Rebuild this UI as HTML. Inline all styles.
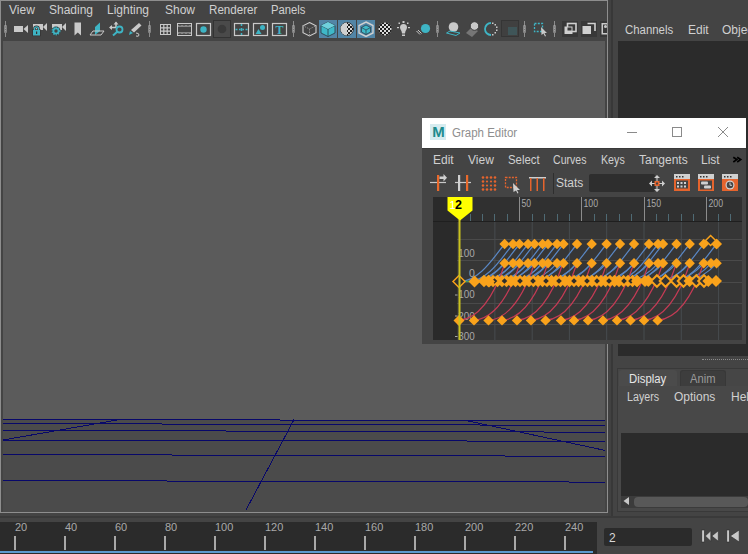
<!DOCTYPE html>
<html><head><meta charset="utf-8">
<style>
*{margin:0;padding:0;box-sizing:border-box}
html,body{width:748px;height:554px;overflow:hidden;background:#444444;font-family:"Liberation Sans",sans-serif;}
.a{position:absolute}
.t{position:absolute;color:#d0d0d0;font-size:12px;line-height:14px;white-space:nowrap}
</style></head><body>
<!-- left panel -->
<div class="a" style="left:0;top:0;width:608px;height:513px;border:1px solid #8e8e8e;background:#444"></div>
<div class="t" style="left:9px;top:3px">View</div>
<div class="t" style="left:49px;top:3px">Shading</div>
<div class="t" style="left:107px;top:3px">Lighting</div>
<div class="t" style="left:165px;top:3px">Show</div>
<div class="t" style="left:209px;top:3px;transform:scaleX(0.967);transform-origin:0 0">Renderer</div>
<div class="t" style="left:271px;top:3px;transform:scaleX(0.94);transform-origin:0 0">Panels</div>


<svg class="a" style="left:0;top:16px" width="608" height="26" viewBox="0 16 608 26">
 <defs>
  <pattern id="chk" width="4" height="4" patternUnits="userSpaceOnUse"><rect width="4" height="4" fill="#dadada"/><rect width="2" height="2" fill="#1e1e1e"/><rect x="2" y="2" width="2" height="2" fill="#1e1e1e"/></pattern>
  <g id="sep"><line x1="0" y1="21" x2="0" y2="37" stroke="#8c8c8c" stroke-width="1"/><rect x="-1.2" y="25" width="2.4" height="8" rx="0.8" fill="#a0a0a0"/><path d="M0 26.5v1M0 29v1M0 31.5v1" stroke="#6a6a6a" stroke-width="0.8"/></g>
 </defs>
 <g fill="#c9c9c9">
  <use href="#sep" x="5.5"/><use href="#sep" x="149.5"/><use href="#sep" x="293.5"/><use href="#sep" x="437.5"/><use href="#sep" x="524.5"/><use href="#sep" x="554.5"/>
  <!-- camera -->
  <rect x="14" y="26" width="9" height="6"/><path d="M23.5 29 L28 25 V33 Z"/>
  <rect x="33" y="24" width="10" height="6"/><path d="M43 27 L47 23 V31 Z"/>
  <path d="M34.5 30 v-1.2 a2 2 0 0 1 4 0 v1.2" stroke="#333" stroke-width="2.6" fill="none"/><rect x="32.3" y="29.3" width="8.4" height="6.9" fill="#333"/><rect x="33" y="30" width="7" height="5.5" fill="#3eb4c4"/><path d="M34.5 30 v-1.2 a2 2 0 0 1 4 0 v1.2" stroke="#3eb4c4" stroke-width="1.3" fill="none"/><rect x="36" y="31.5" width="1.2" height="2.5" fill="#333"/>
  <rect x="52" y="24" width="10" height="6"/><path d="M62 27 L66 23 V31 Z"/>
  <circle cx="56" cy="31" r="4.6" fill="#333"/>
  <circle cx="56" cy="31" r="2.6" stroke="#3eb4c4" stroke-width="1.8" fill="#444"/>
  <circle cx="56" cy="31" r="3.9" stroke="#3eb4c4" stroke-width="1.2" stroke-dasharray="1.3 1.2" fill="none"/>
  <!-- bookmark -->
  <path d="M74.5 22.5 h6.5 v13 l-3.25 -3 l-3.25 3 z"/>
  <!-- plane -->
  <path d="M95 27 L100 22.5 V31 L95 35 Z" fill="#3eb4c4"/>
  <path d="M90 35 L93 31 L104 31 L101 35 Z" fill="none" stroke="#c9c9c9" stroke-width="1"/>
  <!-- move zoom -->
  <path d="M110 27.5 H116 V22.5" stroke="#c9c9c9" stroke-width="1.5" fill="none"/><path d="M109 27.5 l3 -2.5 v5 z M116 21.5 l-2.5 3 h5 z"/>
  <circle cx="119.5" cy="29.5" r="3" stroke="#3eb4c4" stroke-width="1.8" fill="none"/><line x1="117.5" y1="31.5" x2="113" y2="35.5" stroke="#3eb4c4" stroke-width="2"/>
  <!-- brush -->
  <path d="M131 30 L139 23 L141.5 25.5 L134 32.5 Z"/><path d="M129 35 L130 31 L133 33 Z" fill="#3eb4c4"/>
  <path d="M136 33 q3 0 3 2 q0 2 -3 1" stroke="#c9c9c9" stroke-width="1" fill="none"/>
  <!-- grid -->
  <rect x="160.5" y="24.5" width="10" height="10" fill="none" stroke="#c9c9c9" stroke-width="1"/>
  <path d="M163.8 24.5 V34.5 M167.2 24.5 V34.5 M160.5 27.8 H170.5 M160.5 31.2 H170.5" stroke="#c9c9c9" stroke-width="1.2"/>
  <!-- film -->
  <rect x="177.5" y="23.5" width="14" height="12" fill="none" stroke="#c9c9c9" stroke-width="1"/>
  <path d="M177.5 26 H191.5 M177.5 33 H191.5" stroke="#c9c9c9" stroke-width="1"/>
  <path d="M179 24 h2 v1.5 h-2z M183 24 h2 v1.5 h-2z M187 24 h2 v1.5 h-2z M179 33.5 h2 v1.5 h-2z M183 33.5 h2 v1.5 h-2z M187 33.5 h2 v1.5 h-2z" fill="#444"/>
  <!-- gate -->
  <rect x="196.5" y="23.5" width="14" height="12" fill="none" stroke="#c9c9c9" stroke-width="1.2"/>
  <circle cx="203.5" cy="29.5" r="3.2" fill="#3eb4c4"/>
  <!-- dark btn -->
  <rect x="213" y="20" width="18" height="18" fill="#333"/><rect x="214" y="21" width="16" height="16" fill="#4a4a4a"/>
  <circle cx="222" cy="29" r="4.3" fill="#3a3a3a"/>
  <!-- field chart -->
  <rect x="234.5" y="23.5" width="14" height="12" fill="none" stroke="#c9c9c9" stroke-width="1.2"/>
  <path d="M241.5 24 v2 M241.5 28 v3 M241.5 33 v2 M235.5 29.5 h2 M239 29.5 h1.5 M242.5 29.5 h1.5 M245.5 29.5 h2" stroke="#3eb4c4" stroke-width="1.5"/>
  <!-- shapes -->
  <rect x="253.5" y="23.5" width="14" height="12" fill="none" stroke="#c9c9c9" stroke-width="1.2"/>
  <path d="M255.5 34 L258.5 29 L261.5 34 Z" fill="#3eb4c4"/><circle cx="262.5" cy="27.5" r="2.5" fill="#3eb4c4"/>
  <!-- T -->
  <rect x="272.5" y="23.5" width="14" height="12" fill="none" stroke="#c9c9c9" stroke-width="1.2"/>
  <text x="279.5" y="34" text-anchor="middle" font-family="Liberation Serif, serif" font-weight="bold" font-size="12" fill="#3eb4c4">T</text>
  <!-- wire cube -->
  <path d="M309.5 22.5 L316 25.8 V32.7 L309.5 36 L303 32.7 V25.8 Z" fill="none" stroke="#cfcfcf" stroke-width="1.1"/><path d="M302.5 25.5 L309.5 29 L316.5 25.5 M309.5 29 V36.5" fill="none" stroke="#8a8a8a" stroke-width="1" stroke-dasharray="1.5 1"/>
  <!-- blue buttons -->
  <rect x="319" y="20" width="18" height="18" fill="#5285a6"/>
  <rect x="338" y="20" width="18" height="18" fill="#5285a6"/>
  <rect x="357" y="20" width="18" height="18" fill="#5285a6"/>
  <path d="M328 22 L335 25.5 V33 L328 36.5 L321 33 V25.5 Z" fill="#3fb8c8" stroke="#2a3a44" stroke-width="0.8"/>
  <path d="M321 25.5 L328 29 L335 25.5 M328 29 V36.5" fill="none" stroke="#2a3a44" stroke-width="0.8"/>
  <path d="M328 22 L335 25.5 L328 29 L321 25.5 Z" fill="#6fd0dc"/>
  <circle cx="347" cy="29" r="6.5" fill="url(#chk)" stroke="#2a2a2a" stroke-width="0.8"/>
  <path d="M347 22.5 A6.5 6.5 0 0 0 347 35.5 Z" fill="#cfcfcf"/>
  <path d="M366 22 L373 25.5 V33 L366 36.5 L359 33 V25.5 Z" fill="#5285a6" stroke="#d0d0d0" stroke-width="1.4"/>
  <path d="M366 25 L370.5 27.5 V32 L366 34.5 L361.5 32 V27.5 Z" fill="#3fb8c8" stroke="#2a3a44" stroke-width="0.7"/>
  <path d="M361.5 27.5 L366 30 L370.5 27.5 M366 30 V34.5" fill="none" stroke="#2a3a44" stroke-width="0.7"/>
  <!-- checker sphere -->
  <circle cx="385" cy="29" r="6.5" fill="url(#chk)"/>
  <!-- bulb -->
  <path d="M403.5 24 a3.5 3.5 0 0 1 3.5 3.5 c0 2 -2 3.5 -2 6 h-3 c0 -2.5 -2 -4 -2 -6 a3.5 3.5 0 0 1 3.5 -3.5z"/>
  <rect x="402" y="34.5" width="3" height="1.5"/><rect x="402.5" y="21" width="2" height="2"/>
  <rect x="397" y="27" width="2" height="1.2"/><rect x="408" y="27" width="2" height="1.2"/>
  <rect x="398.5" y="22.5" width="1.5" height="1.5"/><rect x="407" y="22.5" width="1.5" height="1.5"/>
  <!-- shadow sphere -->
  <circle cx="425.5" cy="28.5" r="4.6" fill="#3eb4c4"/>
  <path d="M416.5 31 L420 34.5 M418 30 L421.5 33.5" stroke="#c9c9c9" stroke-width="1"/>
  <!-- sphere on plane -->
  <circle cx="453.5" cy="27" r="4.8"/>
  <path d="M446.5 33 L450 31 L460 33 L456 35.5 Z" fill="none" stroke="#3eb4c4" stroke-width="1"/>
  <!-- cylinder -->
  <path d="M466 33 L472 27 L478 31 L472 37 Z" fill="#767676"/>
  <circle cx="474.5" cy="26" r="4.3" stroke="#3a3a3a" stroke-width="1"/>
  <!-- ring -->
  <path d="M491 23 A6 6 0 0 0 491 35" fill="none" stroke="#3eb4c4" stroke-width="1.8"/>
  <path d="M492 22.5 h1.5v1.5h-1.5z M494.5 24 h1.5v1.5h-1.5z M496 26.5 h1.5v1.5h-1.5z M496 29.5 h1.5v1.5h-1.5z M494.5 32 h1.5v1.5h-1.5z M492 34 h1.5v1.5h-1.5z"/>
  <!-- dark btn 2 -->
  <rect x="501" y="20" width="18" height="17" fill="#353535"/><rect x="502" y="21" width="16" height="15" fill="#404040"/>
  <rect x="508" y="27" width="9" height="8" fill="#3f5558"/>
  <!-- marquee -->
  <rect x="534.5" y="23.5" width="8" height="8" fill="none" stroke="#3eb4c4" stroke-width="1.3" stroke-dasharray="2 1.3"/>
  <path d="M541 27 L547 33 L544.5 33 L546 36 L545 36.5 L543.5 33.5 L541.5 35 Z"/>
  <!-- dark btn 3,4 -->
  <rect x="562" y="21" width="16" height="16" fill="#383838"/>
  <rect x="567.5" y="23.5" width="8.5" height="8" fill="none" stroke="#d0d0d0" stroke-width="1.6"/>
  <rect x="564.5" y="26.5" width="8" height="7.5" fill="#d0d0d0"/>
  <rect x="567.5" y="27.5" width="4" height="3" fill="#383838"/>
  <rect x="581" y="21" width="16" height="16" fill="#383838"/>
  <path d="M587.5 23.5 h7.5 v7.5" fill="none" stroke="#d0d0d0" stroke-width="1.6"/>
  <rect x="582.5" y="26" width="8.5" height="8" fill="#d0d0d0"/>
  <rect x="600" y="21" width="7" height="16" fill="#383838"/>
  <path d="M601.5 23 v11.5 h5.5 v-1.5 h-4 v-8.5 h4 v-1.5 z"/><circle cx="605.5" cy="26.5" r="1.5"/>
 </g>
</svg>

<!-- viewport -->
<div class="a" style="left:3px;top:41px;width:602px;height:471px;background:#5b5b5b"></div>
<svg class="a" style="left:0;top:0" width="608" height="554"><path d="M3 419.5 L605 420.6 V512 H3 Z" fill="#4b4b4b"/></svg>
<svg class="a" style="left:0;top:0" width="608" height="554">
 <g stroke="#08086a" stroke-width="1" fill="none" shape-rendering="crispEdges">
  <line x1="3" y1="419.5" x2="605" y2="420.6"/>
  <line x1="3" y1="423.5" x2="605" y2="425.4"/>
  <line x1="3" y1="430.3" x2="605" y2="432.2"/>
  <line x1="3" y1="440" x2="605" y2="441.3"/>
  <line x1="3" y1="454.5" x2="605" y2="456.3"/>
  <line x1="3" y1="480.6" x2="605" y2="482.1"/>
  <line x1="3" y1="440" x2="120" y2="419.5"/>
  <line x1="294" y1="419.6" x2="246" y2="510"/>
  <line x1="466.6" y1="420.6" x2="605" y2="450.4"/>
 </g>
</svg>

<!-- separator -->
<div class="a" style="left:608px;top:0;width:3px;height:516px;background:#414141"></div>
<div class="a" style="left:611px;top:0;width:2px;height:516px;background:#383838"></div>
<div class="a" style="left:0;top:516px;width:748px;height:2px;background:#3a3a3a"></div>

<!-- right panel -->
<div class="t" style="left:625px;top:23px;transform:scaleX(0.95);transform-origin:0 0">Channels</div>
<div class="t" style="left:688px;top:23px">Edit</div>
<div class="t" style="left:722px;top:23px">Object</div>
<div class="a" style="left:618px;top:41px;width:130px;height:315px;background:#2b2b2b"></div>

<!-- timeline -->
<div class="a" style="left:0;top:522px;width:597px;height:32px;background:#2b2b2b"></div>
<svg class="a" style="left:0;top:522px" width="597" height="32" viewBox="0 522 597 32" font-family="Liberation Sans, sans-serif">
<rect x="14.0" y="536" width="2" height="14" fill="#a8a8a8"/>
<text x="15.0" y="531" font-size="11" fill="#a9a9a9">20</text>
<rect x="64.0" y="536" width="2" height="14" fill="#a8a8a8"/>
<text x="65.0" y="531" font-size="11" fill="#a9a9a9">40</text>
<rect x="114.0" y="536" width="2" height="14" fill="#a8a8a8"/>
<text x="115.0" y="531" font-size="11" fill="#a9a9a9">60</text>
<rect x="164.0" y="536" width="2" height="14" fill="#a8a8a8"/>
<text x="165.0" y="531" font-size="11" fill="#a9a9a9">80</text>
<rect x="214.0" y="536" width="2" height="14" fill="#a8a8a8"/>
<text x="215.0" y="531" font-size="11" fill="#a9a9a9">100</text>
<rect x="264.0" y="536" width="2" height="14" fill="#a8a8a8"/>
<text x="265.0" y="531" font-size="11" fill="#a9a9a9">120</text>
<rect x="314.0" y="536" width="2" height="14" fill="#a8a8a8"/>
<text x="315.0" y="531" font-size="11" fill="#a9a9a9">140</text>
<rect x="364.0" y="536" width="2" height="14" fill="#a8a8a8"/>
<text x="365.0" y="531" font-size="11" fill="#a9a9a9">160</text>
<rect x="414.0" y="536" width="2" height="14" fill="#a8a8a8"/>
<text x="415.0" y="531" font-size="11" fill="#a9a9a9">180</text>
<rect x="464.0" y="536" width="2" height="14" fill="#a8a8a8"/>
<text x="465.0" y="531" font-size="11" fill="#a9a9a9">200</text>
<rect x="514.0" y="536" width="2" height="14" fill="#a8a8a8"/>
<text x="515.0" y="531" font-size="11" fill="#a9a9a9">220</text>
<rect x="564.0" y="536" width="2" height="14" fill="#a8a8a8"/>
<text x="565.0" y="531" font-size="11" fill="#a9a9a9">240</text>
 <rect x="0" y="551" width="593" height="2" fill="#5a9ad0"/>
</svg>
<!-- frame field -->
<div class="a" style="left:604px;top:528px;width:88px;height:18px;border-radius:2px;background:#2b2b2b"></div>
<div class="t" style="left:609px;top:531px;color:#d8d8d8">2</div>
<svg class="a" style="left:698px;top:526px" width="50" height="22" viewBox="698 526 50 22">
 <g fill="#c8c8c8" stroke="#2a2a2a" stroke-width="0.6">
  <rect x="701.8" y="530" width="2.6" height="12"/><path d="M705.3 536 L710.8 530.8 V541.2 Z M711.8 536 L718.3 530.8 V541.2 Z"/>
  <rect x="726.8" y="530" width="2.6" height="12"/><path d="M730.3 536 L739.2 530 V542 Z"/>
 </g>
</svg>
<!-- layer editor -->
<div class="a" style="left:702px;top:359px;width:46px;height:1px;border-top:1px dotted #8a8a8a"></div>
<div class="a" style="left:617px;top:368px;width:132px;height:144px;border:1px solid #393939;background:#464646"></div>
<div class="a" style="left:619px;top:370px;width:58px;height:17px;background:#4b4b4b;border-radius:3px 3px 0 0"></div>
<div class="a" style="left:680px;top:370px;width:46px;height:16px;background:#3d3d3d;border:1px solid #383838;border-bottom:none;border-radius:3px 3px 0 0"></div>
<div class="a" style="left:618px;top:386px;width:130px;height:125px;background:#484848"></div>
<div class="t" style="left:629px;top:372px;color:#e6e6e6;transform:scaleX(0.945);transform-origin:0 0">Display</div>
<div class="t" style="left:690px;top:372px;color:#9a9a9a;transform:scaleX(0.93);transform-origin:0 0">Anim</div>
<div class="t" style="left:627px;top:390px;transform:scaleX(0.89);transform-origin:0 0">Layers</div>
<div class="t" style="left:674px;top:390px">Options</div>
<div class="t" style="left:731px;top:390px">Help</div>
<div class="a" style="left:621px;top:433px;width:127px;height:63px;background:#2b2b2b"></div>
<div class="a" style="left:621px;top:496px;width:127px;height:12px;background:#3b3b3b"></div>
<div class="a" style="left:634px;top:497px;width:114px;height:10px;border-radius:4px;background:#585858"></div>
<svg class="a" style="left:620px;top:494px" width="12" height="14" viewBox="620 494 12 14"><path d="M623.5 501 L629 497 V505 Z" fill="#c8c8c8"/></svg>

<!-- graph editor window -->
<div class="a" style="left:422px;top:118px;width:324px;height:226px;background:#444"></div>
<div class="a" style="left:422px;top:118px;width:324px;height:30px;background:#fff"></div>
<div class="a" style="left:422px;top:148px;width:324px;height:1px;background:#3a3a3a"></div>
<div class="a" style="left:430px;top:124px;width:16px;height:16px;background:#d6ecf0"></div>
<div class="a" style="left:431px;top:123px;width:15px;height:16px;color:#1d8b8e;font-size:15px;font-weight:bold;line-height:18px;text-align:center">M</div>
<div class="a" style="left:452px;top:126px;color:#8e8e8e;font-size:12.5px;line-height:15px;transform:scaleX(0.92);transform-origin:0 0">Graph Editor</div>
<svg class="a" style="left:620px;top:120px" width="128" height="26" viewBox="620 120 128 26">
 <g stroke="#8a8a8a" stroke-width="1" fill="none">
  <line x1="627" y1="132.5" x2="637" y2="132.5"/>
  <rect x="672.5" y="127.5" width="9" height="9"/>
  <path d="M718 127 L728 137 M728 127 L718 137"/>
 </g>
</svg>
<div class="t" style="left:433px;top:153px">Edit</div>
<div class="t" style="left:468px;top:153px">View</div>
<div class="t" style="left:508px;top:153px;transform:scaleX(0.95);transform-origin:0 0">Select</div>
<div class="t" style="left:553px;top:153px;transform:scaleX(0.88);transform-origin:0 0">Curves</div>
<div class="t" style="left:601px;top:153px;transform:scaleX(0.89);transform-origin:0 0">Keys</div>
<div class="t" style="left:639px;top:153px">Tangents</div>
<div class="t" style="left:701px;top:153px">List</div>
<svg class="a" style="left:730px;top:154px" width="14" height="11" viewBox="730 154 14 11"><path d="M733.3 157.2 L736.8 159.6 L733.3 162 M737.2 157.2 L740.7 159.6 L737.2 162" stroke="#000" stroke-width="1.7" fill="none"/></svg>
<svg class="a" style="left:422px;top:168px" width="326" height="28" viewBox="422 168 326 28">
 <g>
  <!-- icon1 -->
  <line x1="430" y1="182.5" x2="446" y2="182.5" stroke="#c8c8c8" stroke-width="1.2"/>
  <rect x="437" y="175" width="2.2" height="16" fill="#ea6a2c"/>
  <path d="M439.5 176.5 h4 v-2.5 l3.5 3.8 l-3.5 3.8 v-2.5 h-4 z" fill="#d0d0d0"/>
  <!-- icon2 -->
  <line x1="455" y1="182.5" x2="471" y2="182.5" stroke="#c8c8c8" stroke-width="1.2"/>
  <rect x="458" y="175" width="2.2" height="16" fill="#d0d0d0"/>
  <rect x="466" y="175" width="2.2" height="16" fill="#ea6a2c"/>
  <!-- icon3 dots -->
  <g fill="#e5642d">
   <circle cx="483" cy="177.5" r="1.3"/><circle cx="487" cy="177.5" r="1.3"/><circle cx="491" cy="177.5" r="1.3"/><circle cx="495" cy="177.5" r="1.3"/>
   <circle cx="483" cy="181.5" r="1.3"/><circle cx="495" cy="181.5" r="1.3"/><circle cx="483" cy="185.5" r="1.3"/><circle cx="495" cy="185.5" r="1.3"/>
   <circle cx="483" cy="189.5" r="1.3"/><circle cx="487" cy="189.5" r="1.3"/><circle cx="491" cy="189.5" r="1.3"/><circle cx="495" cy="189.5" r="1.3"/>
   <circle cx="487" cy="181.5" r="1.1"/><circle cx="491" cy="181.5" r="1.1"/><circle cx="487" cy="185.5" r="1.1"/><circle cx="491" cy="185.5" r="1.1"/>
  </g>
  <!-- icon4 -->
  <rect x="505.5" y="177.5" width="11" height="10" fill="none" stroke="#e5642d" stroke-width="1.3" stroke-dasharray="2 1.2"/>
  <path d="M513 183 L520 190 L517 190 L518.5 193 L517.5 193.5 L516 190.5 L513.5 192 Z" fill="#cfcfcf"/>
  <!-- icon5 -->
  <rect x="529" y="177" width="17" height="1.5" fill="#cfcfcf"/>
  <rect x="530" y="178" width="1.5" height="13" fill="#e5642d"/>
  <rect x="536.5" y="178" width="1.5" height="13" fill="#e5642d"/>
  <rect x="543" y="178" width="1.5" height="13" fill="#e5642d"/>
  <line x1="553.5" y1="173" x2="553.5" y2="194" stroke="#2e2e2e" stroke-width="1"/>
  <!-- stats field -->
  <rect x="589" y="174" width="66" height="18" rx="2" fill="#2e2e2e"/>
  <!-- move icon -->
  <g fill="#cfcfcf">
   <path d="M657 175 l-3 3 h6 z M657 192 l-3 -3 h6 z M649 183.5 l3 -3 v6 z M665 183.5 l-3 -3 v6 z"/>
   <rect x="656.5" y="177" width="1" height="14"/><rect x="651" y="183" width="13" height="1"/>
  </g>
  <rect x="654.5" y="181" width="5" height="5" fill="#e5642d"/><rect x="656" y="182.5" width="2" height="2" fill="#444"/>
  <!-- right three icons -->
  <g>
   <rect x="674" y="174" width="16" height="17" fill="#e5642d"/><rect x="674" y="174" width="16" height="5" fill="#d0d0d0"/>
   <rect x="676" y="180.5" width="12" height="8" fill="#444"/>
   <path d="M676 176h1.5v1.5h-1.5z M679 176h1.5v1.5h-1.5z M682 176h1.5v1.5h-1.5z" fill="#333"/>
   <path d="M677 182h2v2h-2z M680.5 182h2v2h-2z M684 182h2v2h-2z M677 185.5h2v2h-2z M680.5 185.5h2v2h-2z M684 185.5h2v2h-2z" fill="#d0d0d0"/>
   <rect x="698" y="174" width="16" height="17" fill="#e5642d"/><rect x="698" y="174" width="16" height="5" fill="#d0d0d0"/>
   <path d="M700 176h1.5v1.5h-1.5z M703 176h1.5v1.5h-1.5z M706 176h1.5v1.5h-1.5z" fill="#333"/>
   <rect x="700" y="180.5" width="12" height="9" fill="#444"/>
   <rect x="701" y="181.5" width="7" height="3" rx="1" fill="#d0d0d0"/><rect x="704" y="185.5" width="7" height="3" rx="1" fill="#d0d0d0"/>
   <rect x="722" y="174" width="16" height="17" fill="#e5642d"/><rect x="722" y="174" width="16" height="5" fill="#d0d0d0"/>
   <path d="M724 176h1.5v1.5h-1.5z M727 176h1.5v1.5h-1.5z M730 176h1.5v1.5h-1.5z" fill="#333"/>
   <circle cx="730" cy="185" r="4.5" fill="#d0d0d0"/><circle cx="730" cy="185" r="3.3" fill="#444"/>
   <path d="M730 182.5 v2.8 h2" stroke="#d0d0d0" stroke-width="1" fill="none"/>
  </g>
 </g>
</svg>
<div class="t" style="left:556px;top:176px">Stats</div>
<!-- graph area -->
<svg class="a" style="left:433px;top:197px" width="309" height="143" viewBox="433 197 309 143" font-family="Liberation Sans, sans-serif">
 <rect x="433" y="197" width="309" height="143" fill="#363636"/>
 <rect x="433" y="197" width="309" height="24" fill="#303030"/>
 <rect x="433" y="197" width="24" height="143" fill="#2a2a2a"/>
 <line x1="433" y1="221.5" x2="742" y2="221.5" stroke="#1f1f1f" stroke-width="1"/>
<line x1="470.5" y1="214" x2="470.5" y2="221" stroke="#4f6a74" stroke-width="1"/>
<line x1="482.5" y1="214" x2="482.5" y2="221" stroke="#4f6a74" stroke-width="1"/>
<line x1="494.5" y1="214" x2="494.5" y2="221" stroke="#4f6a74" stroke-width="1"/>
<line x1="507.5" y1="214" x2="507.5" y2="221" stroke="#4f6a74" stroke-width="1"/>
<line x1="519.5" y1="197" x2="519.5" y2="221" stroke="#8c8c8c" stroke-width="1"/>
<text x="521.5" y="207.3" font-size="10" fill="#a8a8a8" textLength="9.6" lengthAdjust="spacingAndGlyphs">50</text>
<line x1="532.5" y1="214" x2="532.5" y2="221" stroke="#4f6a74" stroke-width="1"/>
<line x1="544.5" y1="214" x2="544.5" y2="221" stroke="#4f6a74" stroke-width="1"/>
<line x1="557.5" y1="214" x2="557.5" y2="221" stroke="#4f6a74" stroke-width="1"/>
<line x1="569.5" y1="214" x2="569.5" y2="221" stroke="#4f6a74" stroke-width="1"/>
<line x1="581.5" y1="197" x2="581.5" y2="221" stroke="#8c8c8c" stroke-width="1"/>
<text x="583.5" y="207.3" font-size="10" fill="#a8a8a8" textLength="14.6" lengthAdjust="spacingAndGlyphs">100</text>
<line x1="594.5" y1="214" x2="594.5" y2="221" stroke="#4f6a74" stroke-width="1"/>
<line x1="606.5" y1="214" x2="606.5" y2="221" stroke="#4f6a74" stroke-width="1"/>
<line x1="619.5" y1="214" x2="619.5" y2="221" stroke="#4f6a74" stroke-width="1"/>
<line x1="631.5" y1="214" x2="631.5" y2="221" stroke="#4f6a74" stroke-width="1"/>
<line x1="644.5" y1="197" x2="644.5" y2="221" stroke="#8c8c8c" stroke-width="1"/>
<text x="646.5" y="207.3" font-size="10" fill="#a8a8a8" textLength="14.6" lengthAdjust="spacingAndGlyphs">150</text>
<line x1="656.5" y1="214" x2="656.5" y2="221" stroke="#4f6a74" stroke-width="1"/>
<line x1="668.5" y1="214" x2="668.5" y2="221" stroke="#4f6a74" stroke-width="1"/>
<line x1="681.5" y1="214" x2="681.5" y2="221" stroke="#4f6a74" stroke-width="1"/>
<line x1="693.5" y1="214" x2="693.5" y2="221" stroke="#4f6a74" stroke-width="1"/>
<line x1="706.5" y1="197" x2="706.5" y2="221" stroke="#8c8c8c" stroke-width="1"/>
<text x="708.5" y="207.3" font-size="10" fill="#a8a8a8" textLength="14.6" lengthAdjust="spacingAndGlyphs">200</text>
<line x1="718.5" y1="214" x2="718.5" y2="221" stroke="#4f6a74" stroke-width="1"/>
<line x1="730.5" y1="214" x2="730.5" y2="221" stroke="#4f6a74" stroke-width="1"/>
<!--GSTART-->
<line x1="494.9" y1="222" x2="494.9" y2="340" stroke="#474c4f" stroke-width="1"/>
<line x1="532.2" y1="222" x2="532.2" y2="340" stroke="#474c4f" stroke-width="1"/>
<line x1="569.4" y1="222" x2="569.4" y2="340" stroke="#474c4f" stroke-width="1"/>
<line x1="606.7" y1="222" x2="606.7" y2="340" stroke="#474c4f" stroke-width="1"/>
<line x1="644.0" y1="222" x2="644.0" y2="340" stroke="#474c4f" stroke-width="1"/>
<line x1="681.3" y1="222" x2="681.3" y2="340" stroke="#474c4f" stroke-width="1"/>
<line x1="718.6" y1="222" x2="718.6" y2="340" stroke="#474c4f" stroke-width="1"/>
<line x1="457" y1="239.5" x2="742" y2="239.5" stroke="#4a4a4a" stroke-width="1"/>
<line x1="457" y1="260.5" x2="742" y2="260.5" stroke="#4a4a4a" stroke-width="1"/>
<line x1="457" y1="282.5" x2="742" y2="282.5" stroke="#4a4a4a" stroke-width="1"/>
<line x1="457" y1="303.5" x2="742" y2="303.5" stroke="#4a4a4a" stroke-width="1"/>
<line x1="457" y1="324.5" x2="742" y2="324.5" stroke="#4a4a4a" stroke-width="1"/>
<text x="458.3" y="257" font-size="10.5" fill="#a8a8a8" textLength="16.5" lengthAdjust="spacingAndGlyphs">100</text>
<text x="469" y="277" font-size="10.5" fill="#a8a8a8">0</text>
<text x="458.3" y="298" font-size="10.5" fill="#a8a8a8" textLength="16.5" lengthAdjust="spacingAndGlyphs">100</text>
<text x="458.3" y="319.5" font-size="10.5" fill="#a8a8a8" textLength="16.5" lengthAdjust="spacingAndGlyphs">200</text>
<text x="458.3" y="340" font-size="10.5" fill="#a8a8a8" textLength="16.5" lengthAdjust="spacingAndGlyphs">300</text>
<rect x="455" y="294.5" width="2.5" height="1" fill="#a8a8a8"/>
<rect x="455" y="315.5" width="2.5" height="1" fill="#a8a8a8"/>
<rect x="455" y="336" width="2.5" height="1" fill="#a8a8a8"/>
<path d="M459.6 281.5 C479.6 281.5 494.6 256 504.6 244" stroke="#5a87c4" stroke-width="1.2" fill="none"/>
<path d="M468.0 281.5 C488.0 281.5 503.0 256 513.0 244" stroke="#5a87c4" stroke-width="1.2" fill="none"/>
<path d="M474.5 281.5 C494.5 281.5 509.5 256 519.5 244" stroke="#5a87c4" stroke-width="1.2" fill="none"/>
<path d="M483.0 281.5 C503.0 281.5 518.0 256 528.0 244" stroke="#5a87c4" stroke-width="1.2" fill="none"/>
<path d="M489.5 281.5 C509.5 281.5 524.5 256 534.5 244" stroke="#5a87c4" stroke-width="1.2" fill="none"/>
<path d="M497.6 281.5 C517.6 281.5 532.6 256 542.6 244" stroke="#5a87c4" stroke-width="1.2" fill="none"/>
<path d="M503.0 281.5 C523.0 281.5 538.0 256 548.0 244" stroke="#5a87c4" stroke-width="1.2" fill="none"/>
<path d="M512.0 281.5 C532.0 281.5 547.0 256 557.0 244" stroke="#5a87c4" stroke-width="1.2" fill="none"/>
<path d="M518.5 281.5 C538.5 281.5 553.5 256 563.5 244" stroke="#5a87c4" stroke-width="1.2" fill="none"/>
<path d="M532.0 281.5 C552.0 281.5 567.0 256 577.0 244" stroke="#5a87c4" stroke-width="1.2" fill="none"/>
<path d="M546.7 281.5 C566.7 281.5 581.7 256 591.7 244" stroke="#5a87c4" stroke-width="1.2" fill="none"/>
<path d="M561.6 281.5 C581.6 281.5 596.6 256 606.6 244" stroke="#5a87c4" stroke-width="1.2" fill="none"/>
<path d="M575.0 281.5 C595.0 281.5 610.0 256 620.0 244" stroke="#5a87c4" stroke-width="1.2" fill="none"/>
<path d="M589.0 281.5 C609.0 281.5 624.0 256 634.0 244" stroke="#5a87c4" stroke-width="1.2" fill="none"/>
<path d="M604.0 281.5 C624.0 281.5 639.0 256 649.0 244" stroke="#5a87c4" stroke-width="1.2" fill="none"/>
<path d="M613.0 281.5 C633.0 281.5 648.0 256 658.0 244" stroke="#5a87c4" stroke-width="1.2" fill="none"/>
<path d="M618.0 281.5 C638.0 281.5 653.0 256 663.0 244" stroke="#5a87c4" stroke-width="1.2" fill="none"/>
<path d="M631.5 281.5 C651.5 281.5 666.5 256 676.5 244" stroke="#5a87c4" stroke-width="1.2" fill="none"/>
<path d="M644.7 281.5 C664.7 281.5 679.7 256 689.7 244" stroke="#5a87c4" stroke-width="1.2" fill="none"/>
<path d="M658.7 281.5 C678.7 281.5 693.7 256 703.7 244" stroke="#5a87c4" stroke-width="1.2" fill="none"/>
<path d="M671.6 281.5 C691.6 281.5 706.6 256 716.6 244" stroke="#5a87c4" stroke-width="1.2" fill="none"/>
<path d="M469.6 281.5 C484.6 281.5 497.6 271.3 504.6 263.3" stroke="#5a87c4" stroke-width="1.2" fill="none"/>
<path d="M478.0 281.5 C493.0 281.5 506.0 271.3 513.0 263.3" stroke="#5a87c4" stroke-width="1.2" fill="none"/>
<path d="M484.5 281.5 C499.5 281.5 512.5 271.3 519.5 263.3" stroke="#5a87c4" stroke-width="1.2" fill="none"/>
<path d="M493.0 281.5 C508.0 281.5 521.0 271.3 528.0 263.3" stroke="#5a87c4" stroke-width="1.2" fill="none"/>
<path d="M499.5 281.5 C514.5 281.5 527.5 271.3 534.5 263.3" stroke="#5a87c4" stroke-width="1.2" fill="none"/>
<path d="M507.6 281.5 C522.6 281.5 535.6 271.3 542.6 263.3" stroke="#5a87c4" stroke-width="1.2" fill="none"/>
<path d="M513.0 281.5 C528.0 281.5 541.0 271.3 548.0 263.3" stroke="#5a87c4" stroke-width="1.2" fill="none"/>
<path d="M522.0 281.5 C537.0 281.5 550.0 271.3 557.0 263.3" stroke="#5a87c4" stroke-width="1.2" fill="none"/>
<path d="M528.5 281.5 C543.5 281.5 556.5 271.3 563.5 263.3" stroke="#5a87c4" stroke-width="1.2" fill="none"/>
<path d="M542.0 281.5 C557.0 281.5 570.0 271.3 577.0 263.3" stroke="#5a87c4" stroke-width="1.2" fill="none"/>
<path d="M556.7 281.5 C571.7 281.5 584.7 271.3 591.7 263.3" stroke="#5a87c4" stroke-width="1.2" fill="none"/>
<path d="M571.6 281.5 C586.6 281.5 599.6 271.3 606.6 263.3" stroke="#5a87c4" stroke-width="1.2" fill="none"/>
<path d="M585.0 281.5 C600.0 281.5 613.0 271.3 620.0 263.3" stroke="#5a87c4" stroke-width="1.2" fill="none"/>
<path d="M599.0 281.5 C614.0 281.5 627.0 271.3 634.0 263.3" stroke="#5a87c4" stroke-width="1.2" fill="none"/>
<path d="M614.0 281.5 C629.0 281.5 642.0 271.3 649.0 263.3" stroke="#5a87c4" stroke-width="1.2" fill="none"/>
<path d="M623.0 281.5 C638.0 281.5 651.0 271.3 658.0 263.3" stroke="#5a87c4" stroke-width="1.2" fill="none"/>
<path d="M628.0 281.5 C643.0 281.5 656.0 271.3 663.0 263.3" stroke="#5a87c4" stroke-width="1.2" fill="none"/>
<path d="M641.5 281.5 C656.5 281.5 669.5 271.3 676.5 263.3" stroke="#5a87c4" stroke-width="1.2" fill="none"/>
<path d="M654.7 281.5 C669.7 281.5 682.7 271.3 689.7 263.3" stroke="#5a87c4" stroke-width="1.2" fill="none"/>
<path d="M668.7 281.5 C683.7 281.5 696.7 271.3 703.7 263.3" stroke="#5a87c4" stroke-width="1.2" fill="none"/>
<path d="M681.6 281.5 C696.6 281.5 709.6 271.3 716.6 263.3" stroke="#5a87c4" stroke-width="1.2" fill="none"/>
<path d="M676.0 281.5 C691.0 281.5 704.0 271.3 711.0 263.3" stroke="#5a87c4" stroke-width="1.2" fill="none"/>
<path d="M459.0 320.4 C481.0 318.4 495.0 293.3 505.0 263.3" stroke="#c43b55" stroke-width="1.2" fill="none"/>
<path d="M474.0 320.4 C496.0 318.4 510.0 293.3 520.0 263.3" stroke="#c43b55" stroke-width="1.2" fill="none"/>
<path d="M488.5 320.4 C510.5 318.4 524.5 293.3 534.5 263.3" stroke="#c43b55" stroke-width="1.2" fill="none"/>
<path d="M502.0 320.4 C524.0 318.4 538.0 293.3 548.0 263.3" stroke="#c43b55" stroke-width="1.2" fill="none"/>
<path d="M517.0 320.4 C539.0 318.4 553.0 293.3 563.0 263.3" stroke="#c43b55" stroke-width="1.2" fill="none"/>
<path d="M531.0 320.4 C553.0 318.4 567.0 293.3 577.0 263.3" stroke="#c43b55" stroke-width="1.2" fill="none"/>
<path d="M545.6 320.4 C567.6 318.4 581.6 293.3 591.6 263.3" stroke="#c43b55" stroke-width="1.2" fill="none"/>
<path d="M561.0 320.4 C583.0 318.4 597.0 293.3 607.0 263.3" stroke="#c43b55" stroke-width="1.2" fill="none"/>
<path d="M574.0 320.4 C596.0 318.4 610.0 293.3 620.0 263.3" stroke="#c43b55" stroke-width="1.2" fill="none"/>
<path d="M588.0 320.4 C610.0 318.4 624.0 293.3 634.0 263.3" stroke="#c43b55" stroke-width="1.2" fill="none"/>
<path d="M603.0 320.4 C625.0 318.4 639.0 293.3 649.0 263.3" stroke="#c43b55" stroke-width="1.2" fill="none"/>
<path d="M617.0 320.4 C639.0 318.4 653.0 293.3 663.0 263.3" stroke="#c43b55" stroke-width="1.2" fill="none"/>
<path d="M630.5 320.4 C652.5 318.4 666.5 293.3 676.5 263.3" stroke="#c43b55" stroke-width="1.2" fill="none"/>
<path d="M644.0 320.4 C666.0 318.4 680.0 293.3 690.0 263.3" stroke="#c43b55" stroke-width="1.2" fill="none"/>
<path d="M657.6 320.4 C679.6 318.4 693.6 293.3 703.6 263.3" stroke="#c43b55" stroke-width="1.2" fill="none"/>
<path d="M462 281.5 H480" stroke="#3aa060" stroke-width="1.3"/>
<path d="M504.6 238.8 L509.8 244.0 L504.6 249.2 L499.4 244.0 Z" fill="#f9a21b"/>
<path d="M513.0 238.8 L518.2 244.0 L513.0 249.2 L507.8 244.0 Z" fill="#f9a21b"/>
<path d="M519.5 238.8 L524.7 244.0 L519.5 249.2 L514.3 244.0 Z" fill="#f9a21b"/>
<path d="M528.0 238.8 L533.2 244.0 L528.0 249.2 L522.8 244.0 Z" fill="#f9a21b"/>
<path d="M534.5 238.8 L539.7 244.0 L534.5 249.2 L529.3 244.0 Z" fill="#f9a21b"/>
<path d="M542.6 238.8 L547.8 244.0 L542.6 249.2 L537.4 244.0 Z" fill="#f9a21b"/>
<path d="M548.0 238.8 L553.2 244.0 L548.0 249.2 L542.8 244.0 Z" fill="#f9a21b"/>
<path d="M557.0 238.8 L562.2 244.0 L557.0 249.2 L551.8 244.0 Z" fill="#f9a21b"/>
<path d="M563.5 238.8 L568.7 244.0 L563.5 249.2 L558.3 244.0 Z" fill="#f9a21b"/>
<path d="M577.0 238.8 L582.2 244.0 L577.0 249.2 L571.8 244.0 Z" fill="#f9a21b"/>
<path d="M591.7 238.8 L596.9 244.0 L591.7 249.2 L586.5 244.0 Z" fill="#f9a21b"/>
<path d="M606.6 238.8 L611.8 244.0 L606.6 249.2 L601.4 244.0 Z" fill="#f9a21b"/>
<path d="M620.0 238.8 L625.2 244.0 L620.0 249.2 L614.8 244.0 Z" fill="#f9a21b"/>
<path d="M634.0 238.8 L639.2 244.0 L634.0 249.2 L628.8 244.0 Z" fill="#f9a21b"/>
<path d="M649.0 238.8 L654.2 244.0 L649.0 249.2 L643.8 244.0 Z" fill="#f9a21b"/>
<path d="M658.0 238.8 L663.2 244.0 L658.0 249.2 L652.8 244.0 Z" fill="#f9a21b"/>
<path d="M663.0 238.8 L668.2 244.0 L663.0 249.2 L657.8 244.0 Z" fill="#f9a21b"/>
<path d="M676.5 238.8 L681.7 244.0 L676.5 249.2 L671.3 244.0 Z" fill="#f9a21b"/>
<path d="M689.7 238.8 L694.9 244.0 L689.7 249.2 L684.5 244.0 Z" fill="#f9a21b"/>
<path d="M703.7 238.8 L708.9 244.0 L703.7 249.2 L698.5 244.0 Z" fill="#f9a21b"/>
<path d="M716.6 238.8 L721.8 244.0 L716.6 249.2 L711.4 244.0 Z" fill="#f9a21b"/>
<path d="M504.6 258.1 L509.8 263.3 L504.6 268.5 L499.4 263.3 Z" fill="#f9a21b"/>
<path d="M513.0 258.1 L518.2 263.3 L513.0 268.5 L507.8 263.3 Z" fill="#f9a21b"/>
<path d="M519.5 258.1 L524.7 263.3 L519.5 268.5 L514.3 263.3 Z" fill="#f9a21b"/>
<path d="M528.0 258.1 L533.2 263.3 L528.0 268.5 L522.8 263.3 Z" fill="#f9a21b"/>
<path d="M534.5 258.1 L539.7 263.3 L534.5 268.5 L529.3 263.3 Z" fill="#f9a21b"/>
<path d="M542.6 258.1 L547.8 263.3 L542.6 268.5 L537.4 263.3 Z" fill="#f9a21b"/>
<path d="M548.0 258.1 L553.2 263.3 L548.0 268.5 L542.8 263.3 Z" fill="#f9a21b"/>
<path d="M557.0 258.1 L562.2 263.3 L557.0 268.5 L551.8 263.3 Z" fill="#f9a21b"/>
<path d="M563.5 258.1 L568.7 263.3 L563.5 268.5 L558.3 263.3 Z" fill="#f9a21b"/>
<path d="M577.0 258.1 L582.2 263.3 L577.0 268.5 L571.8 263.3 Z" fill="#f9a21b"/>
<path d="M591.7 258.1 L596.9 263.3 L591.7 268.5 L586.5 263.3 Z" fill="#f9a21b"/>
<path d="M606.6 258.1 L611.8 263.3 L606.6 268.5 L601.4 263.3 Z" fill="#f9a21b"/>
<path d="M620.0 258.1 L625.2 263.3 L620.0 268.5 L614.8 263.3 Z" fill="#f9a21b"/>
<path d="M634.0 258.1 L639.2 263.3 L634.0 268.5 L628.8 263.3 Z" fill="#f9a21b"/>
<path d="M649.0 258.1 L654.2 263.3 L649.0 268.5 L643.8 263.3 Z" fill="#f9a21b"/>
<path d="M658.0 258.1 L663.2 263.3 L658.0 268.5 L652.8 263.3 Z" fill="#f9a21b"/>
<path d="M663.0 258.1 L668.2 263.3 L663.0 268.5 L657.8 263.3 Z" fill="#f9a21b"/>
<path d="M676.5 258.1 L681.7 263.3 L676.5 268.5 L671.3 263.3 Z" fill="#f9a21b"/>
<path d="M689.7 258.1 L694.9 263.3 L689.7 268.5 L684.5 263.3 Z" fill="#f9a21b"/>
<path d="M703.7 258.1 L708.9 263.3 L703.7 268.5 L698.5 263.3 Z" fill="#f9a21b"/>
<path d="M716.6 258.1 L721.8 263.3 L716.6 268.5 L711.4 263.3 Z" fill="#f9a21b"/>
<path d="M711.0 258.1 L716.2 263.3 L711.0 268.5 L705.8 263.3 Z" fill="#f9a21b"/>
<path d="M474.0 315.2 L479.2 320.4 L474.0 325.6 L468.8 320.4 Z" fill="#f9a21b"/>
<path d="M488.5 315.2 L493.7 320.4 L488.5 325.6 L483.3 320.4 Z" fill="#f9a21b"/>
<path d="M502.0 315.2 L507.2 320.4 L502.0 325.6 L496.8 320.4 Z" fill="#f9a21b"/>
<path d="M517.0 315.2 L522.2 320.4 L517.0 325.6 L511.8 320.4 Z" fill="#f9a21b"/>
<path d="M531.0 315.2 L536.2 320.4 L531.0 325.6 L525.8 320.4 Z" fill="#f9a21b"/>
<path d="M545.6 315.2 L550.8 320.4 L545.6 325.6 L540.4 320.4 Z" fill="#f9a21b"/>
<path d="M561.0 315.2 L566.2 320.4 L561.0 325.6 L555.8 320.4 Z" fill="#f9a21b"/>
<path d="M574.0 315.2 L579.2 320.4 L574.0 325.6 L568.8 320.4 Z" fill="#f9a21b"/>
<path d="M588.0 315.2 L593.2 320.4 L588.0 325.6 L582.8 320.4 Z" fill="#f9a21b"/>
<path d="M603.0 315.2 L608.2 320.4 L603.0 325.6 L597.8 320.4 Z" fill="#f9a21b"/>
<path d="M617.0 315.2 L622.2 320.4 L617.0 325.6 L611.8 320.4 Z" fill="#f9a21b"/>
<path d="M630.5 315.2 L635.7 320.4 L630.5 325.6 L625.3 320.4 Z" fill="#f9a21b"/>
<path d="M644.0 315.2 L649.2 320.4 L644.0 325.6 L638.8 320.4 Z" fill="#f9a21b"/>
<path d="M657.6 315.2 L662.8 320.4 L657.6 325.6 L652.4 320.4 Z" fill="#f9a21b"/>
<path d="M484.0 274.8 L490.2 281.0 L484.0 287.2 L477.8 281.0 Z" fill="#f9a21b"/>
<path d="M488.5 274.8 L494.7 281.0 L488.5 287.2 L482.3 281.0 Z" fill="#f9a21b"/>
<path d="M493.0 274.8 L499.2 281.0 L493.0 287.2 L486.8 281.0 Z" fill="#f9a21b"/>
<path d="M497.5 274.8 L503.7 281.0 L497.5 287.2 L491.3 281.0 Z" fill="#f9a21b"/>
<path d="M502.0 274.8 L508.2 281.0 L502.0 287.2 L495.8 281.0 Z" fill="#f9a21b"/>
<path d="M506.5 274.8 L512.7 281.0 L506.5 287.2 L500.3 281.0 Z" fill="#f9a21b"/>
<path d="M511.0 274.8 L517.2 281.0 L511.0 287.2 L504.8 281.0 Z" fill="#f9a21b"/>
<path d="M515.5 274.8 L521.7 281.0 L515.5 287.2 L509.3 281.0 Z" fill="#f9a21b"/>
<path d="M520.0 274.8 L526.2 281.0 L520.0 287.2 L513.8 281.0 Z" fill="#f9a21b"/>
<path d="M524.5 274.8 L530.7 281.0 L524.5 287.2 L518.3 281.0 Z" fill="#f9a21b"/>
<path d="M529.0 274.8 L535.2 281.0 L529.0 287.2 L522.8 281.0 Z" fill="#f9a21b"/>
<path d="M533.5 274.8 L539.7 281.0 L533.5 287.2 L527.3 281.0 Z" fill="#f9a21b"/>
<path d="M538.0 274.8 L544.2 281.0 L538.0 287.2 L531.8 281.0 Z" fill="#f9a21b"/>
<path d="M542.5 274.8 L548.7 281.0 L542.5 287.2 L536.3 281.0 Z" fill="#f9a21b"/>
<path d="M547.0 274.8 L553.2 281.0 L547.0 287.2 L540.8 281.0 Z" fill="#f9a21b"/>
<path d="M551.5 274.8 L557.7 281.0 L551.5 287.2 L545.3 281.0 Z" fill="#f9a21b"/>
<path d="M556.0 274.8 L562.2 281.0 L556.0 287.2 L549.8 281.0 Z" fill="#f9a21b"/>
<path d="M560.5 274.8 L566.7 281.0 L560.5 287.2 L554.3 281.0 Z" fill="#f9a21b"/>
<path d="M565.0 274.8 L571.2 281.0 L565.0 287.2 L558.8 281.0 Z" fill="#f9a21b"/>
<path d="M569.5 274.8 L575.7 281.0 L569.5 287.2 L563.3 281.0 Z" fill="#f9a21b"/>
<path d="M574.0 274.8 L580.2 281.0 L574.0 287.2 L567.8 281.0 Z" fill="#f9a21b"/>
<path d="M578.5 274.8 L584.7 281.0 L578.5 287.2 L572.3 281.0 Z" fill="#f9a21b"/>
<path d="M583.0 274.8 L589.2 281.0 L583.0 287.2 L576.8 281.0 Z" fill="#f9a21b"/>
<path d="M587.5 274.8 L593.7 281.0 L587.5 287.2 L581.3 281.0 Z" fill="#f9a21b"/>
<path d="M592.0 274.8 L598.2 281.0 L592.0 287.2 L585.8 281.0 Z" fill="#f9a21b"/>
<path d="M596.5 274.8 L602.7 281.0 L596.5 287.2 L590.3 281.0 Z" fill="#f9a21b"/>
<path d="M601.0 274.8 L607.2 281.0 L601.0 287.2 L594.8 281.0 Z" fill="#f9a21b"/>
<path d="M605.5 274.8 L611.7 281.0 L605.5 287.2 L599.3 281.0 Z" fill="#f9a21b"/>
<path d="M610.0 274.8 L616.2 281.0 L610.0 287.2 L603.8 281.0 Z" fill="#f9a21b"/>
<path d="M614.5 274.8 L620.7 281.0 L614.5 287.2 L608.3 281.0 Z" fill="#f9a21b"/>
<path d="M619.0 274.8 L625.2 281.0 L619.0 287.2 L612.8 281.0 Z" fill="#f9a21b"/>
<path d="M623.5 274.8 L629.7 281.0 L623.5 287.2 L617.3 281.0 Z" fill="#f9a21b"/>
<path d="M628.0 274.8 L634.2 281.0 L628.0 287.2 L621.8 281.0 Z" fill="#f9a21b"/>
<path d="M632.5 274.8 L638.7 281.0 L632.5 287.2 L626.3 281.0 Z" fill="#f9a21b"/>
<path d="M637.0 274.8 L643.2 281.0 L637.0 287.2 L630.8 281.0 Z" fill="#f9a21b"/>
<path d="M494.5 278.2 L497.3 281.0 L494.5 283.8 L491.7 281.0 Z" fill="#2e2e2e"/>
<path d="M504.5 278.2 L507.3 281.0 L504.5 283.8 L501.7 281.0 Z" fill="#2e2e2e"/>
<path d="M520.0 278.2 L522.8 281.0 L520.0 283.8 L517.2 281.0 Z" fill="#2e2e2e"/>
<path d="M533.0 278.2 L535.8 281.0 L533.0 283.8 L530.2 281.0 Z" fill="#2e2e2e"/>
<path d="M546.0 278.2 L548.8 281.0 L546.0 283.8 L543.2 281.0 Z" fill="#2e2e2e"/>
<path d="M559.0 278.2 L561.8 281.0 L559.0 283.8 L556.2 281.0 Z" fill="#2e2e2e"/>
<path d="M574.0 278.2 L576.8 281.0 L574.0 283.8 L571.2 281.0 Z" fill="#2e2e2e"/>
<path d="M587.0 278.2 L589.8 281.0 L587.0 283.8 L584.2 281.0 Z" fill="#2e2e2e"/>
<path d="M597.0 278.2 L599.8 281.0 L597.0 283.8 L594.2 281.0 Z" fill="#2e2e2e"/>
<path d="M609.0 278.2 L611.8 281.0 L609.0 283.8 L606.2 281.0 Z" fill="#2e2e2e"/>
<path d="M624.0 278.2 L626.8 281.0 L624.0 283.8 L621.2 281.0 Z" fill="#2e2e2e"/>
<path d="M631.0 278.2 L633.8 281.0 L631.0 283.8 L628.2 281.0 Z" fill="#2e2e2e"/>
<path d="M637.0 275.0 L643.0 281.0 L637.0 287.0 L631.0 281.0 Z" fill="#f9a21b"/>
<path d="M645.0 275.0 L651.0 281.0 L645.0 287.0 L639.0 281.0 Z" fill="#f9a21b"/>
<path d="M648.3 275.0 L654.3 281.0 L648.3 287.0 L642.3 281.0 Z" fill="#f9a21b"/>
<path d="M656.9 275.2 L662.7 281.0 L656.9 286.8 L651.1 281.0 Z" fill="#333" stroke="#f9a21b" stroke-width="2"/>
<path d="M665.5 275.2 L671.3 281.0 L665.5 286.8 L659.7 281.0 Z" fill="#333" stroke="#f9a21b" stroke-width="2"/>
<path d="M676.6 275.2 L682.4 281.0 L676.6 286.8 L670.8 281.0 Z" fill="#333" stroke="#f9a21b" stroke-width="2"/>
<path d="M683.5 275.2 L689.3 281.0 L683.5 286.8 L677.7 281.0 Z" fill="#333" stroke="#f9a21b" stroke-width="2"/>
<path d="M689.5 275.0 L695.5 281.0 L689.5 287.0 L683.5 281.0 Z" fill="#f9a21b"/>
<path d="M696.3 275.2 L702.1 281.0 L696.3 286.8 L690.5 281.0 Z" fill="#333" stroke="#f9a21b" stroke-width="2"/>
<path d="M704.0 275.2 L709.8 281.0 L704.0 286.8 L698.2 281.0 Z" fill="#333" stroke="#f9a21b" stroke-width="2"/>
<path d="M708.3 275.0 L714.3 281.0 L708.3 287.0 L702.3 281.0 Z" fill="#f9a21b"/>
<path d="M716.0 275.0 L722.0 281.0 L716.0 287.0 L710.0 281.0 Z" fill="#f9a21b"/>
<path d="M474.5 275.5 L480.5 281.5 L474.5 287.5 L468.5 281.5 Z" fill="#f9a21b"/>
<path d="M489.0 275.5 L495.0 281.5 L489.0 287.5 L483.0 281.5 Z" fill="#f9a21b"/>
<path d="M459 275.5 L465 281.5 L459 287.5 L453 281.5 Z" fill="#2e2e2e" stroke="#f9a21b" stroke-width="1.5"/>
<path d="M459.0 314.9 L464.5 320.4 L459.0 325.9 L453.5 320.4 Z" fill="#f9a21b"/>
<path d="M710.6 235.5 L715.6 240.5 L710.6 245.5 L705.6 240.5 Z" fill="#333" stroke="#f9a21b" stroke-width="1.5"/>
<path d="M716.6 238.8 L721.8 244.0 L716.6 249.2 L711.4 244.0 Z" fill="#f9a21b"/>
<!--GEND-->
 <!-- time marker -->
 <rect x="458.5" y="211" width="2" height="130" fill="#c9c21f"/>
 <path d="M447.5 197 H472.5 V210.5 L460 220.5 L447.5 210.5 Z" fill="#ffff00"/>
 <text x="449.5" y="209" font-size="11" fill="#ffffff">1</text>
 <text x="455" y="209" font-size="12.5" font-weight="bold" fill="#000">2</text>
</svg>
</body></html>
